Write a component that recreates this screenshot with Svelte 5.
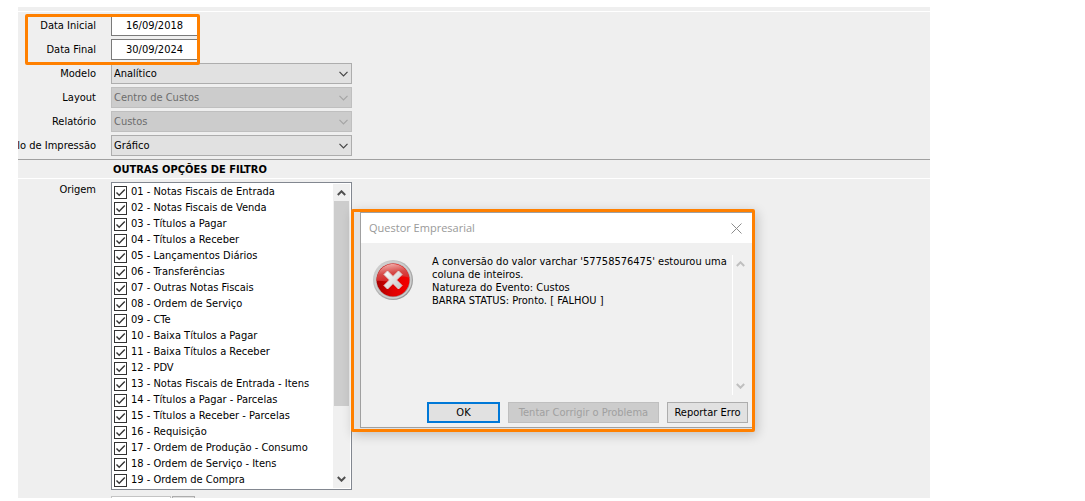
<script>
	let startDate = '16/09/2018';
	let endDate = '30/09/2024';
	let extra = '';

	const combos = [
		{ id: 'modelo', label: 'Modelo', value: 'Analítico', disabled: false },
		{ id: 'layout', label: 'Layout', value: 'Centro de Custos', disabled: true },
		{ id: 'relatorio', label: 'Relatório', value: 'Custos', disabled: true },
		{ id: 'impressao', label: 'lo de Impressão', value: 'Gráfico', disabled: false }
	];

	let origins = [
		'01 - Notas Fiscais de Entrada',
		'02 - Notas Fiscais de Venda',
		'03 - Títulos a Pagar',
		'04 - Títulos a Receber',
		'05 - Lançamentos Diários',
		'06 - Transferências',
		'07 - Outras Notas Fiscais',
		'08 - Ordem de Serviço',
		'09 - CTe',
		'10 - Baixa Títulos a Pagar',
		'11 - Baixa Títulos a Receber',
		'12 - PDV',
		'13 - Notas Fiscais de Entrada - Itens',
		'14 - Títulos a Pagar - Parcelas',
		'15 - Títulos a Receber - Parcelas',
		'16 - Requisição',
		'17 - Ordem de Produção - Consumo',
		'18 - Ordem de Serviço - Itens',
		'19 - Ordem de Compra'
	].map((name) => ({ name, checked: true }));
</script>

<main>
	<form class="panel">
		<div class="topline"></div>
		<section class="fields">
			<div class="row">
				<label for="inicial">Data Inicial</label>
				<input id="inicial" class="date" type="text" bind:value={startDate} />
			</div>
			<div class="row">
				<label for="final">Data Final</label>
				<input id="final" class="date" type="text" bind:value={endDate} />
			</div>
			{#each combos as combo}
				<div class="row">
					<label for={combo.id}>{combo.label}</label>
					<div class="combo">
						<select id={combo.id} disabled={combo.disabled}>
							<option>{combo.value}</option>
						</select>
						<svg class:off={combo.disabled} width="9" height="6" viewBox="0 0 9 6">
							<path d="M0.5 0.8 L4.5 4.8 L8.5 0.8" />
						</svg>
					</div>
				</div>
			{/each}
			<div class="mark dates"></div>
		</section>

		<h2>OUTRAS OPÇÕES DE FILTRO</h2>

		<section class="row origin">
			<span class="caption" id="origem">Origem</span>
			<div class="list" role="group" aria-labelledby="origem">
				<div class="items">
					{#each origins as origin}
						<label class="item">
							<span class="tick">
								<input type="checkbox" bind:checked={origin.checked} />
								{#if origin.checked}
									<svg width="13" height="13" viewBox="0 0 13 13">
										<path d="M2.5 6.5 L5.2 9.3 L10.8 3.5" />
									</svg>
								{/if}
							</span>
							{origin.name}
						</label>
					{/each}
				</div>
				<div class="scroll">
					<svg width="9" height="6" viewBox="0 0 9 6"><path d="M0.8 5 L4.5 1.3 L8.2 5" /></svg>
					<div class="thumb"></div>
					<svg width="9" height="6" viewBox="0 0 9 6"><path d="M0.8 1 L4.5 4.7 L8.2 1" /></svg>
				</div>
			</div>
		</section>

		<section class="next">
			<input type="text" aria-label="Filtro" bind:value={extra} />
			<button type="button" aria-label="Pesquisar"></button>
		</section>
	</form>

	<div class="mark popup">
		<div class="dialog" role="dialog" aria-labelledby="titulo">
			<header>
				<span id="titulo">Questor Empresarial</span>
				<button class="close" type="button" aria-label="Fechar">
					<svg width="11" height="11" viewBox="0 0 11 11">
						<path d="M0.5 0.5 L10.5 10.5 M10.5 0.5 L0.5 10.5" />
					</svg>
				</button>
			</header>
			<div class="body">
				<svg class="error" width="42" height="42" viewBox="0 0 42 42">
					<defs>
						<linearGradient id="rim" x1="0" y1="0" x2="1" y2="1">
							<stop offset="0" stop-color="#d8d8d8" />
							<stop offset="0.5" stop-color="#b4b4b4" />
							<stop offset="1" stop-color="#8c8c8c" />
						</linearGradient>
						<linearGradient id="gloss" x1="0.3" y1="0" x2="0.6" y2="1">
							<stop offset="0" stop-color="#f3b0ac" />
							<stop offset="0.5" stop-color="#d64a48" />
							<stop offset="1" stop-color="#d82020" />
						</linearGradient>
						<linearGradient id="base" x1="0" y1="0" x2="1" y2="0">
							<stop offset="0" stop-color="#a80000" />
							<stop offset="0.5" stop-color="#e00000" />
							<stop offset="1" stop-color="#f40000" />
						</linearGradient>
						<linearGradient id="cross" x1="0" y1="0" x2="1" y2="1">
							<stop offset="0" stop-color="#ffffff" />
							<stop offset="1" stop-color="#c4c4c4" />
						</linearGradient>
					</defs>
					<circle cx="21" cy="21" r="20" fill="url(#rim)" />
					<circle cx="21" cy="21" r="18" fill="none" stroke="#cfcfcf" stroke-width="1.5" />
					<circle cx="21" cy="21" r="16.5" fill="url(#base)" />
					<path
						d="M4.6 22 A16.5 16.5 0 0 1 37.4 19 C30 16 24 18 19 21 C14 24 9 21 4.6 22 Z"
						fill="url(#gloss)"
					/>
					<path
						d="M12 15.5 L15.5 12 L21 17.5 L26.5 12 L30 15.5 L24.5 21 L30 26.5 L26.5 30 L21 24.5 L15.5 30 L12 26.5 L17.5 21 Z"
						fill="url(#cross)"
						stroke="#dcdcdc"
						stroke-linejoin="round"
					/>
				</svg>
				<p>
					A conversão do valor varchar '57758576475' estourou uma<br />
					coluna de inteiros.<br />
					Natureza do Evento: Custos<br />
					BARRA STATUS: Pronto. [ FALHOU ]
				</p>
				<div class="scroll faded">
					<svg width="9" height="6" viewBox="0 0 9 6"><path d="M0.8 5 L4.5 1.3 L8.2 5" /></svg>
					<svg width="9" height="6" viewBox="0 0 9 6"><path d="M0.8 1 L4.5 4.7 L8.2 1" /></svg>
				</div>
			</div>
			<footer>
				<button class="ok" type="button">OK</button>
				<button class="fix" type="button" disabled>Tentar Corrigir o Problema</button>
				<button class="report" type="button">Reportar Erro</button>
			</footer>
		</div>
	</div>
</main>

<style>
	:global(body) {
		margin: 0;
		background-color: #fff;
	}
	main {
		position: relative;
		padding: 7px 155px 3px 18px;
		font-family: 'DejaVu Sans Condensed', Tahoma, sans-serif;
		font-size: 11px;
		line-height: 16px;
		color: #000;
	}
	main * {
		box-sizing: border-box;
	}
	input,
	select,
	button {
		font: inherit;
		color: inherit;
		margin: 0;
		border-radius: 0;
		appearance: none;
	}
	svg {
		flex-shrink: 0;
	}
	.combo path,
	.tick path,
	.scroll path {
		fill: none;
	}
	.panel {
		background-color: #efefef;
		overflow: hidden;
	}
	.topline {
		height: 5px;
		border-bottom: 1px solid #fff;
	}
	.fields {
		position: relative;
		display: flex;
		flex-direction: column;
		gap: 3px;
		padding: 3px 0;
		border-bottom: 1px solid #a0a0a0;
	}
	.row {
		display: grid;
		grid-template-columns: 78px 240px;
		column-gap: 15px;
		align-items: center;
		white-space: nowrap;
	}
	.row > label,
	.caption {
		display: flex;
		justify-content: flex-end;
	}
	.date {
		width: 87px;
		height: 21px;
		padding: 0;
		border: 1px solid #7a7a7a;
		background-color: #fff;
		text-align: center;
	}
	.combo {
		display: grid;
		align-items: center;
		width: 241px;
	}
	.combo > * {
		grid-area: 1 / 1;
	}
	.combo select {
		width: 100%;
		height: 21px;
		padding: 1px 2px 0;
		border: 1px solid #adadad;
		background-color: #e1e1e1;
	}
	.combo select:disabled {
		border-color: #bfbfbf;
		background-color: #ccc;
		color: #6d6d6d;
		opacity: 1;
	}
	.combo svg {
		justify-self: end;
		margin-right: 4px;
		stroke: #444;
		stroke-width: 1.2;
		pointer-events: none;
	}
	.combo svg.off {
		stroke: #a5a5a5;
	}
	.mark {
		position: absolute;
		border: 3px solid #ff8000;
		border-radius: 2px;
	}
	.dates {
		top: 2px;
		left: 7px;
		width: 175px;
		height: 51px;
		pointer-events: none;
	}
	h2 {
		margin: 0;
		padding: 2px 0 0 95px;
		border-bottom: 1px solid #fff;
		font-size: 11px;
		line-height: 16px;
		font-weight: bold;
	}
	.origin {
		align-items: start;
		padding-top: 3px;
	}
	.list {
		display: flex;
		width: 241px;
		height: 308px;
		padding: 1px;
		border: 1px solid #828790;
		background-color: #fff;
	}
	.items {
		flex: 1;
		padding-left: 1px;
	}
	.item {
		display: flex;
		align-items: center;
		gap: 4px;
		height: 16px;
	}
	.tick {
		display: grid;
		width: 13px;
		height: 13px;
	}
	.tick > * {
		grid-area: 1 / 1;
	}
	.tick input {
		width: 13px;
		height: 13px;
		border: 1px solid #333;
		background-color: #fff;
	}
	.tick svg {
		stroke: #333;
		stroke-width: 1.4;
		pointer-events: none;
	}
	.scroll {
		display: flex;
		flex-direction: column;
		align-items: center;
		width: 17px;
		padding: 6px 1px 6px 0;
		background-color: #f0f0f0;
	}
	.scroll svg {
		stroke: #505050;
		stroke-width: 2;
	}
	.thumb {
		width: 15px;
		height: 205px;
		margin-top: 5px;
		margin-bottom: auto;
		background-color: #cdcdcd;
	}
	.next {
		display: flex;
		gap: 1px;
		height: 2px;
		margin: 6px 0 0 93px;
		overflow: hidden;
	}
	.next input {
		width: 60px;
		height: 21px;
		border: 1px solid #c4c4c4;
		background-color: #fff;
	}
	.next button {
		width: 23px;
		height: 21px;
		border: 1px solid #adadad;
		background-color: #e1e1e1;
	}
	.popup {
		top: 209px;
		left: 351px;
		width: 404px;
		height: 223px;
		padding: 0 0 1px 6px;
		background-color: #e2e2e2;
		box-shadow: 2px 3px 12px rgba(0, 0, 0, 0.2);
	}
	.dialog {
		display: flex;
		flex-direction: column;
		height: 100%;
		border: 1px solid #a0a0a0;
		border-right: 0;
		background-color: #f0f0f0;
	}
	header {
		display: flex;
		align-items: center;
		justify-content: space-between;
		height: 30px;
		padding: 0 10px 0 8px;
		background-color: #fff;
		color: #999;
		font-family: 'Open Sans', 'Segoe UI', sans-serif;
		font-size: 11px;
	}
	.close {
		display: flex;
		padding: 0;
		border: 0;
		background: none;
	}
	.close svg {
		stroke: #8c8c8c;
	}
	.body {
		flex: 1;
		display: flex;
		padding-top: 12px;
	}
	.error {
		margin: 4px 0 0 11px;
	}
	p {
		flex: 1;
		margin: 0 0 0 18px;
		line-height: 13px;
		white-space: nowrap;
	}
	.faded {
		justify-content: space-between;
		width: 20px;
		padding-right: 4px;
		border-left: 1px solid #fff;
	}
	.faded svg {
		stroke: #bfbfbf;
	}
	footer {
		display: flex;
		justify-content: flex-end;
		gap: 8px;
		padding: 7px 4px 4px 0;
	}
	footer button {
		height: 21px;
		padding: 0;
		border: 1px solid #adadad;
		background-color: #e1e1e1;
		white-space: nowrap;
	}
	.ok {
		width: 73px;
		border: 2px solid #0078d7;
	}
	.fix {
		width: 151px;
	}
	.fix:disabled {
		border-color: #bfbfbf;
		background-color: #ccc;
		color: #a0a0a0;
	}
	.report {
		width: 81px;
	}
</style>
